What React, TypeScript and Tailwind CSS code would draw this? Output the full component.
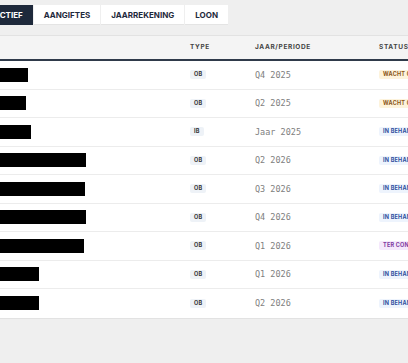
import React from 'react';

type Status = 'wacht' | 'behandeling' | 'controle';

type Row = { redact: number; type: string; period: string; status: Status };

const rows: Row[] = [
  { redact: 28, type: 'OB', period: 'Q4 2025', status: 'wacht' },
  { redact: 26, type: 'OB', period: 'Q2 2025', status: 'wacht' },
  { redact: 31, type: 'IB', period: 'Jaar 2025', status: 'behandeling' },
  { redact: 86, type: 'OB', period: 'Q2 2026', status: 'behandeling' },
  { redact: 85, type: 'OB', period: 'Q3 2026', status: 'behandeling' },
  { redact: 86, type: 'OB', period: 'Q4 2026', status: 'behandeling' },
  { redact: 84, type: 'OB', period: 'Q1 2026', status: 'controle' },
  { redact: 39, type: 'OB', period: 'Q1 2026', status: 'behandeling' },
  { redact: 39, type: 'OB', period: 'Q2 2026', status: 'behandeling' },
];

const statusStyles: Record<Status, { label: string; cls: string }> = {
  wacht: { label: 'WACHT OP KLANT', cls: 'bg-[#fdf3dc] text-[#8a5314]' },
  behandeling: { label: 'IN BEHANDELING', cls: 'bg-[#eef4fd] text-[#2f4f9e]' },
  controle: { label: 'TER CONTROLE', cls: 'bg-[#f5e8fc] text-[#7e3aa0]' },
};

const tabs = ['ACTIEF', 'AANGIFTES', 'JAARREKENING', 'LOON'];

export default function App() {
  return (
    <div className="min-h-screen w-[408px] overflow-hidden bg-[#efefef] font-['Inter',sans-serif]">
      {/* tab bar, scrolled so the first tab is partly hidden */}
      <div className="flex gap-px pt-[5px] -ml-[16px]">
        {tabs.map((t, i) => (
          <div
            key={t}
            className={
              'h-[20px] px-[10px] flex items-center text-[8px] font-bold ' +
              (i === 0 ? 'bg-[#1e293b] text-white' : 'bg-white text-[#1e293b] border-b border-[#e4e4e4]')
            }
          >
            {t}
          </div>
        ))}
      </div>

      <div className="mt-[10px] w-[600px] border-y border-[#e2e2e2]">
        <div className="flex items-center h-[25px] bg-[#f4f4f4] border-b-2 border-[#2f3a4a] text-[6.5px] font-bold tracking-[0.1em] text-[#444]">
          <div className="w-[190px] shrink-0">
            <span className="-ml-[38px]">DEBITEUR</span>
          </div>
          <div className="w-[65px] shrink-0">TYPE</div>
          <div className="w-[124px] shrink-0">JAAR/PERIODE</div>
          <div>STATUS</div>
        </div>

        <div className="bg-white">
          {rows.map((r, i) => (
            <div
              key={i}
              className="flex items-center h-[28.5px] border-b border-[#ececec] last:border-b-0"
            >
              <div className="w-[190px] shrink-0">
                <div className="h-[14px] bg-black" style={{ width: r.redact }} />
              </div>
              <div className="w-[65px] shrink-0 flex items-center">
                <span className="flex items-center h-[9px] px-[4px] rounded-[2px] bg-[#eef2f7] text-[5.5px] leading-none font-bold tracking-[0.05em] text-[#333]">
                  {r.type}
                </span>
              </div>
              <div className="w-[124px] shrink-0 flex items-center font-['DejaVu_Sans_Mono',monospace] text-[8.5px] leading-none text-[#808080]">
                {r.period}
              </div>
              <div className="flex items-center">
                <span
                  className={
                    'flex items-center h-[9px] px-[4px] rounded-[2px] text-[5.5px] leading-none font-bold tracking-[0.04em] whitespace-nowrap ' +
                    statusStyles[r.status].cls
                  }
                >
                  {statusStyles[r.status].label}
                </span>
              </div>
            </div>
          ))}
        </div>
      </div>
    </div>
  );
}
